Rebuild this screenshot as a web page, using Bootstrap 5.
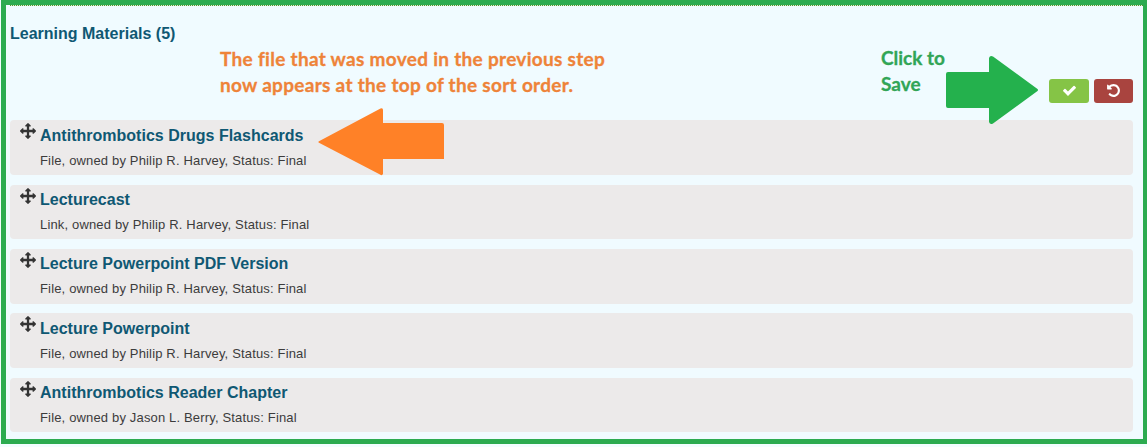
<!DOCTYPE html>
<html lang="en">
<head>
<meta charset="utf-8">
<meta name="viewport" content="width=device-width, initial-scale=1">
<title>Learning Materials</title>
<link href="https://cdn.jsdelivr.net/npm/bootstrap@5.3.0/dist/css/bootstrap.min.css" rel="stylesheet">
<style>
  body { background: #f3fdff; font-family: "Liberation Sans", Arial, sans-serif; overflow: hidden; }
  .panel-frame { margin-left: 1px; width: 1147px; height: 444px; border: 5px solid #2cab50; background: #f0fbff; }
  .panel-top { height: 115.4px; padding: 0 9px 0 4px; }
  .dotted-rule { height: 1px; margin: 0 -9px 0 0; background: repeating-linear-gradient(90deg, #55962d 0 1px, #dcefd8 1px 2px); }
  .panel-title { font-size: 16px; line-height: 20px; font-weight: 700; color: #0f5873; padding-top: 18px; }
  .sort-list { gap: 9.5px; padding: 0 10px 0 4px; }
  .sort-item { height: 54.8px; background: #eceaea; border-radius: 4px; padding: 3px 10px 0; gap: 4px; }
  .sort-item svg { width: 16px; height: 16px; fill: #333; flex: none; }
  .item-name { font-size: 16px; line-height: 20px; font-weight: 700; color: #0f5873; margin-top: 2.4px; letter-spacing: .01px; }
  .item-meta { font-size: 13px; line-height: 18px; color: #3c3c3c; letter-spacing: .16px; margin-top: 6px; }
  .btn-save, .btn-undo { height: 24px; border: 0; border-radius: 3px; }
  .btn-save, .btn-save:hover { width: 40px; background: #85c446; }
  .btn-undo, .btn-undo:hover { width: 39px; background: #a9443f; }
  .actions { gap: 5px; top: 79px; right: 14px; }
  .actions svg { width: 15px; height: 15px; fill: #fff; display: block; margin-bottom: 2px; }
  .note { font-family: Lato, sans-serif; font-weight: 700; font-size: 19px; line-height: 26px; white-space: nowrap; }
  .note-file { left: 220px; top: 46px; color: #ee8339; letter-spacing: .3px; -webkit-text-stroke: .3px #ee8339; }
  .note-save { left: 881px; top: 45px; color: #31a556; -webkit-text-stroke: .3px #31a556; }
  .arrow-file { left: 317px; top: 107px; }
  .arrow-save { left: 945px; top: 55px; }
</style>
</head>
<body>
<svg width="0" height="0" class="position-absolute" aria-hidden="true">
  <symbol id="move" viewBox="0 0 1792 1792"><path d="M1792 896q0 26-19 45l-256 256q-19 19-45 19t-45-19-19-45v-128h-384v384h128q26 0 45 19t19 45-19 45l-256 256q-19 19-45 19t-45-19l-256-256q-19-19-19-45t19-45 45-19h128v-384h-384v128q0 26-19 45t-45 19-45-19l-256-256q-19-19-19-45t19-45l256-256q19-19 45-19t45 19 19 45v128h384v-384h-128q-26 0-45-19t-19-45 19-45l256-256q19-19 45-19t45 19l256 256q19 19 19 45t-19 45-45 19h-128v384h384v-128q0-26 19-45t45-19 45 19l256 256q19 19 19 45z"/></symbol>
</svg>
<main class="panel-frame">
  <header class="panel-top">
    <div class="dotted-rule"></div>
    <h2 class="panel-title mb-0">Learning Materials (5)</h2>
    <div class="actions d-flex position-absolute">
      <button class="btn btn-save p-0 d-flex align-items-center justify-content-center" aria-label="Save">
        <svg viewBox="0 0 1792 1792"><path d="M1671 566q0 40-28 68l-724 724-136 136q-28 28-68 28t-68-28l-136-136-362-362q-28-28-28-68t28-68l136-136q28-28 68-28t68 28l294 295 656-657q28-28 68-28t68 28l136 136q28 28 28 68z"/></svg>
      </button>
      <button class="btn btn-undo p-0 d-flex align-items-center justify-content-center" aria-label="Undo">
        <svg viewBox="0 0 1792 1792"><path d="M1664 896q0 156-61 298t-164 245-245 164-298 61q-172 0-327-72.5t-264-204.5q-7-10-6.5-22.5t8.5-20.5l137-138q10-9 25-9 16 2 23 12 73 95 179 147t225 52q104 0 198.5-40.5t163.5-109.5 109.5-163.5 40.5-198.5-40.5-198.5-109.5-163.5-163.5-109.5-198.5-40.5q-98 0-188 35.5t-160 101.5l137 138q31 30 14 69-17 40-59 40h-448q-26 0-45-19t-19-45v-448q0-42 40-59 39-17 69 14l130 129q107-101 244.5-156.5t284.5-55.5q156 0 298 61t245 164 164 245 61 298z"/></svg>
      </button>
    </div>
  </header>
  <ul class="sort-list list-unstyled d-flex flex-column mb-0">
    <li class="sort-item d-flex align-items-start"><svg><use href="#move"/></svg><div><div class="item-name">Antithrombotics Drugs Flashcards</div><div class="item-meta">File, owned by Philip R. Harvey, Status: Final</div></div></li>
    <li class="sort-item d-flex align-items-start"><svg><use href="#move"/></svg><div><div class="item-name">Lecturecast</div><div class="item-meta">Link, owned by Philip R. Harvey, Status: Final</div></div></li>
    <li class="sort-item d-flex align-items-start"><svg><use href="#move"/></svg><div><div class="item-name">Lecture Powerpoint PDF Version</div><div class="item-meta">File, owned by Philip R. Harvey, Status: Final</div></div></li>
    <li class="sort-item d-flex align-items-start"><svg><use href="#move"/></svg><div><div class="item-name">Lecture Powerpoint</div><div class="item-meta">File, owned by Philip R. Harvey, Status: Final</div></div></li>
    <li class="sort-item d-flex align-items-start"><svg><use href="#move"/></svg><div><div class="item-name">Antithrombotics Reader Chapter</div><div class="item-meta">File, owned by Jason L. Berry, Status: Final</div></div></li>
  </ul>
</main>
<div class="note note-file position-absolute">The file that was moved in the previous step<br>now appears at the top of the sort order.</div>
<svg class="arrow-file position-absolute" width="128" height="69"><path d="M1.5 34.500 63.500 1.500Q66 .5 66 3V16H125Q127 16 127 18V52H66V67Q65 69 63 67.500L1.500 35.500Z" fill="#ff8127"/></svg>
<div class="note note-save position-absolute">Click to<br>Save</div>
<svg class="arrow-save position-absolute" width="94" height="70"><path d="M3 17H44V3Q45 0 48 1.500L92.500 34Q93.500 35 92.500 36L48 68.500Q45 70 44 67V53H3Q1 53 1 51V19Q1 17 3 17Z" fill="#24b14d"/></svg>
<script src="https://cdn.jsdelivr.net/npm/bootstrap@5.3.0/dist/js/bootstrap.bundle.min.js"></script>
</body>
</html>
